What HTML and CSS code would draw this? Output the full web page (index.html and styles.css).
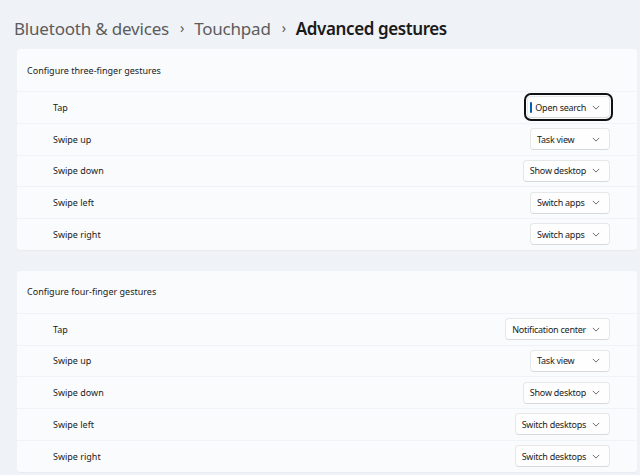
FILE: index.html
```html
<html>
 <head>
  <meta content="width=device-width, initial-scale=1" name="viewport" />
  <link rel="stylesheet" href="styles.css">
 </head>
 <body>
 <div class="crumbs">
  <span class="crumb">Bluetooth &amp; devices</span>
  <span class="sep">&#8250;</span>
  <span class="crumb">Touchpad</span>
  <span class="sep">&#8250;</span>
  <span class="crumb current">Advanced gestures</span>
 </div>

 <div class="group">
  <div class="head">Configure three-finger gestures</div>
  <div class="row"><span class="lbl">Tap</span>
   <div class="drop focus"><span class="caret"></span>Open search <svg viewBox="0 0 10 6"><path d="M1 1l4 4 4-4"/></svg></div></div>
  <div class="row"><span class="lbl">Swipe up</span>
   <div class="drop">Task view <svg viewBox="0 0 10 6"><path d="M1 1l4 4 4-4"/></svg></div></div>
  <div class="row"><span class="lbl">Swipe down</span>
   <div class="drop">Show desktop <svg viewBox="0 0 10 6"><path d="M1 1l4 4 4-4"/></svg></div></div>
  <div class="row"><span class="lbl">Swipe left</span>
   <div class="drop">Switch apps <svg viewBox="0 0 10 6"><path d="M1 1l4 4 4-4"/></svg></div></div>
  <div class="row"><span class="lbl">Swipe right</span>
   <div class="drop">Switch apps <svg viewBox="0 0 10 6"><path d="M1 1l4 4 4-4"/></svg></div></div>
 </div>

 <div class="group">
  <div class="head">Configure four-finger gestures</div>
  <div class="row"><span class="lbl">Tap</span>
   <div class="drop">Notification center <svg viewBox="0 0 10 6"><path d="M1 1l4 4 4-4"/></svg></div></div>
  <div class="row"><span class="lbl">Swipe up</span>
   <div class="drop">Task view <svg viewBox="0 0 10 6"><path d="M1 1l4 4 4-4"/></svg></div></div>
  <div class="row"><span class="lbl">Swipe down</span>
   <div class="drop">Show desktop <svg viewBox="0 0 10 6"><path d="M1 1l4 4 4-4"/></svg></div></div>
  <div class="row"><span class="lbl">Swipe left</span>
   <div class="drop">Switch desktops <svg viewBox="0 0 10 6"><path d="M1 1l4 4 4-4"/></svg></div></div>
  <div class="row"><span class="lbl">Swipe right</span>
   <div class="drop">Switch desktops <svg viewBox="0 0 10 6"><path d="M1 1l4 4 4-4"/></svg></div></div>
 </div>
 </body>
</html>
```

FILE: styles.css
```css
body{
  margin: 0;
  padding: 0 3px 0 17px;
  background-color: #eff2f6;
  font-family: "Noto Sans", "Open Sans", sans-serif;
  color: #1b1b1b;
  overflow: hidden;
}
.crumbs{
  height: 49px;
  display: flex;
  align-items: center;
  margin-left: -3px;
  padding-top: 7px;
  box-sizing: border-box;
  font-size: 17px;
  letter-spacing: -0.2px;
}
.crumb{
  color: #5c5c5c;
}
.crumb.current{
  color: #1a1a1a;
  font-weight: 600;
  letter-spacing: -0.4px;
}
.sep{
  color: #5c5c5c;
  font-size: 14px;
  margin: 0 10px 2px 11px;
}
.group{
  display: flex;
  flex-direction: column;
  gap: 1px;
  margin-bottom: 21px;
  border-radius: 4px;
  overflow: hidden;
  box-shadow: 0 1px 1px rgba(0,0,0,0.03);
}
.head{
  height: 42px;
  display: flex;
  align-items: center;
  padding-left: 10px;
  background: #fafbfd;
  font-size: 9px;
}
.row{
  height: 30.75px;
  display: flex;
  align-items: center;
  justify-content: space-between;
  padding: 0 27px 0 36px;
  background: #fafbfd;
  font-size: 9px;
}
.drop{
  position: relative;
  min-width: 80px;
  height: 22px;
  box-sizing: border-box;
  display: flex;
  align-items: center;
  justify-content: space-between;
  padding: 0 9px 0 6px;
  gap: 6px;
  background: #fefefe;
  border: 1px solid #e6e7e9;
  border-bottom-color: #d8d9db;
  border-radius: 4px;
  font-size: 9px;
  letter-spacing: -0.25px;
  color: #1b1b1b;
}
.drop svg{
  width: 8px;
  height: 5px;
  fill: none;
  stroke: #5a5a5a;
  stroke-width: 1.1;
}
.focus{
  outline: 2px solid #111;
  outline-offset: 1px;
  padding-left: 7px;
}
.caret{
  position: absolute;
  left: 2px;
  top: 5px;
  width: 2px;
  height: 11px;
  border-radius: 1px;
  background: #005fb8;
}
```
